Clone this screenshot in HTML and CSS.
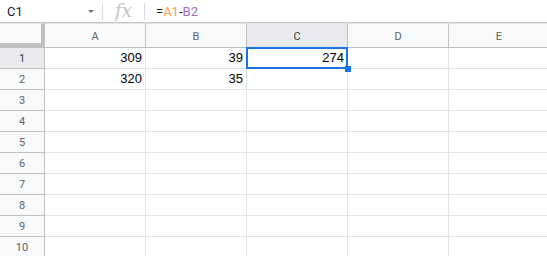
FILE: index.html
```html
<!DOCTYPE html>
<html>
<head>
    <link rel="stylesheet" href="styles.css">
</head>
<body>
<div class="formula-bar">
    <div class="name-box">
        <span class="name-text">C1</span>
        <span class="name-arrow"></span>
    </div>
    <div class="bar-sep"></div>
    <div class="fx">fx</div>
    <div class="bar-sep"></div>
    <div class="formula">=<span class="ref-a">A1</span>-<span class="ref-b">B2</span></div>
</div>

<!-- grid: corner + 5 column headers, then 10 rows -->
<div class="sheet">
    <div class="corner"></div>
    <div class="col-head">A</div>
    <div class="col-head">B</div>
    <div class="col-head selected">C</div>
    <div class="col-head">D</div>
    <div class="col-head">E</div>

    <div class="row-head selected">1</div>
    <div class="cell num">309</div>
    <div class="cell num">39</div>
    <div class="cell num active">274</div>
    <div class="cell"></div>
    <div class="cell"></div>

    <div class="row-head">2</div>
    <div class="cell num">320</div>
    <div class="cell num">35</div>
    <div class="cell"></div>
    <div class="cell"></div>
    <div class="cell"></div>

    <div class="row-head">3</div>
    <div class="cell"></div><div class="cell"></div><div class="cell"></div><div class="cell"></div><div class="cell"></div>
    <div class="row-head">4</div>
    <div class="cell"></div><div class="cell"></div><div class="cell"></div><div class="cell"></div><div class="cell"></div>
    <div class="row-head">5</div>
    <div class="cell"></div><div class="cell"></div><div class="cell"></div><div class="cell"></div><div class="cell"></div>
    <div class="row-head">6</div>
    <div class="cell"></div><div class="cell"></div><div class="cell"></div><div class="cell"></div><div class="cell"></div>
    <div class="row-head">7</div>
    <div class="cell"></div><div class="cell"></div><div class="cell"></div><div class="cell"></div><div class="cell"></div>
    <div class="row-head">8</div>
    <div class="cell"></div><div class="cell"></div><div class="cell"></div><div class="cell"></div><div class="cell"></div>
    <div class="row-head">9</div>
    <div class="cell"></div><div class="cell"></div><div class="cell"></div><div class="cell"></div><div class="cell"></div>
    <div class="row-head">10</div>
    <div class="cell"></div><div class="cell"></div><div class="cell"></div><div class="cell"></div><div class="cell"></div>
</div>
</body>
</html>
```

FILE: styles.css
```css
html, body {
    margin: 0;
    padding: 0;
    background: #fff;
    overflow: hidden;
}

body {
    width: 547px;
    height: 256px;
    font-family: Roboto, "Liberation Sans", Arial, sans-serif;
    color: #000;
}

/* top bar: name box, fx, formula */
.formula-bar {
    display: flex;
    align-items: center;
    height: 22px;
    border-bottom: 1px solid #c4c7c5;
}

.name-box {
    display: flex;
    align-items: center;
    width: 102px;
    box-sizing: border-box;
    padding-left: 7px;
    font-size: 13px;
    color: #202124;
}

.name-text {
    flex: 1;
}

.name-arrow {
    width: 0;
    height: 0;
    margin-right: 8px;
    border-left: 3px solid transparent;
    border-right: 3px solid transparent;
    border-top: 3px solid #757575;
}

.bar-sep {
    width: 1px;
    height: 17px;
    background: #dadce0;
}

.fx {
    width: 41px;
    text-align: center;
    font-family: "DejaVu Serif", "Liberation Serif", serif;
    font-style: italic;
    font-size: 18px;
    line-height: 20px;
    color: #c4c4c4;
}

.formula {
    padding-left: 11px;
    font-size: 13px;
    color: #202124;
}

.ref-a {
    color: #f6a04d;
}

.ref-b {
    color: #a56cbf;
}

/* the grid itself */
.sheet {
    display: grid;
    grid-template-columns: 45px repeat(5, 101px);
    grid-template-rows: 25px;
    grid-auto-rows: 21px;
    width: 547px;
    overflow: hidden;
}

.corner {
    background: #f8f9fa;
    border-right: 4px solid #c0c0c0;
    border-bottom: 5px solid #c0c0c0;
    border-top: 1px solid #e2e3e3;
}

.col-head {
    display: flex;
    align-items: center;
    justify-content: center;
    padding-top: 1px;
    background: #f8f9fa;
    border-right: 1px solid #c0c0c0;
    border-bottom: 1px solid #c0c0c0;
    border-top: 1px solid #e2e3e3;
    font-size: 11px;
    color: #5f6368;
}

.row-head {
    display: flex;
    align-items: center;
    justify-content: center;
    background: #f8f9fa;
    border-right: 1px solid #c0c0c0;
    border-bottom: 1px solid #c0c0c0;
    font-size: 11px;
    color: #5f6368;
}

.col-head.selected, .row-head.selected {
    background: #e8eaed;
    color: #3c4043;
}

.cell {
    position: relative;
    border-right: 1px solid #e2e3e3;
    border-bottom: 1px solid #e2e3e3;
    font-family: "Liberation Sans", Arial, sans-serif;
    font-size: 13px;
    line-height: 20px;
}

.num {
    text-align: right;
    padding-right: 3px;
}

/* selection box and fill handle */
.active::after {
    content: "";
    position: absolute;
    top: -1px;
    left: -1px;
    right: -1px;
    bottom: -1px;
    border: 2px solid #1a73e8;
}

.active::before {
    content: "";
    position: absolute;
    right: -4px;
    bottom: -4px;
    width: 6px;
    height: 6px;
    background: #1a73e8;
    z-index: 1;
}
```
